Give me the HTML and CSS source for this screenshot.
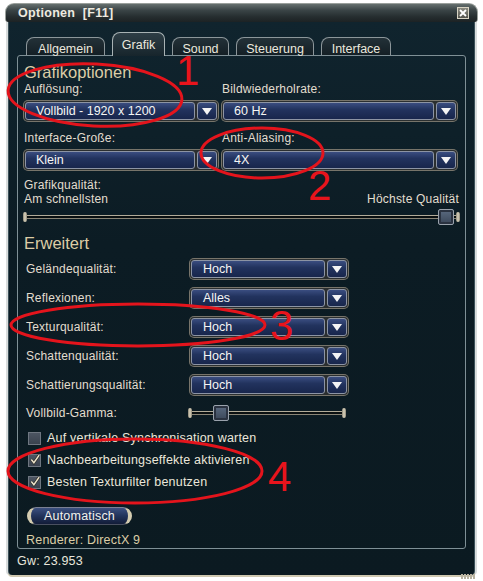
FILE: index.html
```html
<!DOCTYPE html>
<html lang="de">
<head>
<meta charset="utf-8">
<title>Optionen</title>
<link rel="stylesheet" href="styles.css">
</head>
<body>
<div class="window">
  <div class="titlebar">
    <span class="title">Optionen&nbsp; [F11]</span>
    <span class="close"><svg width="8" height="8" viewBox="0 0 8 8"><path d="M1 1L7 7M7 1L1 7" stroke="#fff" stroke-width="1.8"/></svg></span>
  </div>
  <div class="frame">
    <div class="tabs">
      <div class="tab t1">Allgemein</div>
      <div class="tab t2 active">Grafik</div>
      <div class="tab t3">Sound</div>
      <div class="tab t4">Steuerung</div>
      <div class="tab t5">Interface</div>
    </div>
    <div class="panel">
      <div class="heading h-top">Grafikoptionen</div>
      <div class="grid2">
        <div class="cell">
          <div class="label">Auflösung:</div>
          <div class="dd"><div class="v">Vollbild - 1920 x 1200</div><div class="a"><i></i></div></div>
        </div>
        <div class="cell">
          <div class="label">Bildwiederholrate:</div>
          <div class="dd"><div class="v">60 Hz</div><div class="a"><i></i></div></div>
        </div>
        <div class="cell">
          <div class="label">Interface-Große:</div>
          <div class="dd"><div class="v">Klein</div><div class="a"><i></i></div></div>
        </div>
        <div class="cell">
          <div class="label">Anti-Aliasing:</div>
          <div class="dd"><div class="v">4X</div><div class="a"><i></i></div></div>
        </div>
      </div>
      <div class="quality">
        <div class="label">Grafikqualität:</div>
        <div class="qrow"><span class="label">Am schnellsten</span><span class="label">Höchste Qualität</span></div>
      </div>
      <div class="slider wide"><span class="cap"></span><span class="track"></span><span class="cap"></span><span class="thumb thumb-q"></span></div>
      <div class="heading h-adv">Erweitert</div>
      <div class="rows">
        <div class="row"><div class="label">Geländequalität:</div><div class="dd small"><div class="v">Hoch</div><div class="a"><i></i></div></div></div>
        <div class="row"><div class="label">Reflexionen:</div><div class="dd small"><div class="v">Alles</div><div class="a"><i></i></div></div></div>
        <div class="row"><div class="label">Texturqualität:</div><div class="dd small"><div class="v">Hoch</div><div class="a"><i></i></div></div></div>
        <div class="row"><div class="label">Schattenqualität:</div><div class="dd small"><div class="v">Hoch</div><div class="a"><i></i></div></div></div>
        <div class="row"><div class="label">Schattierungsqualität:</div><div class="dd small"><div class="v">Hoch</div><div class="a"><i></i></div></div></div>
      </div>
      <div class="row gamma">
        <div class="label">Vollbild-Gamma:</div>
        <div class="slider short"><span class="cap"></span><span class="track"></span><span class="cap"></span><span class="thumb thumb-g"></span></div>
      </div>
      <div class="checks">
        <div class="check"><span class="box"></span><span class="label">Auf vertikale Synchronisation warten</span></div>
        <div class="check"><span class="box"><svg width="13" height="13" viewBox="0 0 13 13"><path d="M2.5 6.5L5.3 10L11 1.8" fill="none" stroke="#2a2a24" stroke-width="3"/><path d="M2.5 6.5L5.3 10L11 1.8" fill="none" stroke="#ece4cc" stroke-width="1.6"/></svg></span><span class="label">Nachbearbeitungseffekte aktivieren</span></div>
        <div class="check"><span class="box"><svg width="13" height="13" viewBox="0 0 13 13"><path d="M2.5 6.5L5.3 10L11 1.8" fill="none" stroke="#2a2a24" stroke-width="3"/><path d="M2.5 6.5L5.3 10L11 1.8" fill="none" stroke="#ece4cc" stroke-width="1.6"/></svg></span><span class="label">Besten Texturfilter benutzen</span></div>
      </div>
      <div class="btn">Automatisch</div>
      <div class="renderer">Renderer: DirectX 9</div>
    </div>
    <div class="gw">Gw: 23.953</div>
    <span class="grip"></span>
  </div>
</div>

<svg class="marks" width="483" height="581" viewBox="0 0 483 581">
  <g fill="none" stroke="#e4141c" stroke-width="3">
    <ellipse cx="95" cy="95" rx="87" ry="31" transform="rotate(3 95 95)"/>
    <ellipse cx="262" cy="153" rx="61" ry="25"/>
    <ellipse cx="138" cy="325" rx="127" ry="21"/>
    <ellipse cx="135" cy="471" rx="127" ry="32"/>
  </g>
</svg>
<div class="num n1">1</div>
<div class="num n2">2</div>
<div class="num n3">3</div>
<div class="num n4">4</div>
</body>
</html>
```
FILE: styles.css
```css
* { box-sizing: border-box; }
html, body { margin: 0; padding: 0; }
body {
  background: #ffffff;
  width: 483px;
  height: 581px;
  position: relative;
  overflow: hidden;
  font-family: "Liberation Sans", Arial, sans-serif;
  font-size: 12px;
}
.window {
  margin: 3px 0 0 5px;
  width: 473px;
}
.titlebar {
  height: 19px;
  border-radius: 9px 9px 3px 3px;
  background: linear-gradient(#66706f 0%, #3a4446 35%, #262e30 70%, #1c2224 100%);
  border: 1px solid #9aa09c;
  border-bottom: none;
  display: flex;
  align-items: center;
  justify-content: space-between;
  padding: 0 8px 0 12px;
}
.title {
  color: #eeeae0;
  font-weight: bold;
  font-size: 12.5px;
  letter-spacing: 0.3px;
}
.close {
  width: 12px;
  height: 12px;
  background: linear-gradient(#8a8a80, #55554e);
  border: 1px solid #d8d4c4;
  display: flex;
  align-items: center;
  justify-content: center;
}
.frame {
  margin: 0 3px;
  height: 553px;
  background: linear-gradient(#10242e, #0c1c24 40%, #0b1a21);
  border-left: 1px solid #3b5058;
  border-right: 1px solid #3b5058;
  border-radius: 0 0 4px 4px;
  box-shadow: 0 2px 0 #cfc8b0, -2px 0 0 #d8dcdc, 2px 0 0 #d8dcdc;
  padding-top: 10px;
  position: relative;
}
.tabs {
  display: flex;
  align-items: flex-end;
  height: 23px;
  margin-left: 17px;
  gap: 7px;
  position: relative;
  z-index: 1;
}
.tab {
  height: 18px;
  border: 1px solid #8c969a;
  border-bottom: none;
  border-radius: 8px 7px 0 0;
  background: linear-gradient(#233138, #141f25);
  color: #ebe8de;
  font-size: 12.5px;
  text-align: center;
  padding-top: 3px;
  line-height: 16px;
}
.tab.active {
  height: 24px;
  padding-top: 4px;
  background: linear-gradient(#2e3e46, #17252c);
  border-color: #a8b2b4;
  margin-bottom: -1px;
}
.t1 { width: 79px; }
.t2 { width: 53px; }
.t3 { width: 57px; }
.t4 { width: 78px; }
.t5 { width: 70px; }
.panel {
  margin: 0 8px 0 8px;
  border: 1px solid #7f9096;
  border-radius: 3px;
  padding: 0 6px 1px 6px;
}
.heading {
  color: #dccda6;
  font-size: 16.5px;
  line-height: 19px;
  width: fit-content;
}
.h-top { margin-top: 7px; }
.h-adv { margin-top: 12px; line-height: 18px; }
.label {
  color: #e2ddcf;
  font-size: 12px;
  line-height: 14px;
  white-space: nowrap;
  letter-spacing: 0.2px;
}
.grid2 {
  display: grid;
  grid-template-columns: 194px 235px;
  column-gap: 4px;
  row-gap: 10px;
}
.cell .label { margin-bottom: 5px; }
.dd {
  display: flex;
  height: 20px;
  gap: 2px;
  padding: 1px;
  background: #2b2f30;
  border-radius: 4px;
  box-shadow: 0 0 0 1px #77746a;
}
.dd .v {
  flex: 1;
  background: linear-gradient(#3a4d80 0%, #22335e 40%, #18264c 100%);
  border: 1px solid #8c94a4;
  border-radius: 3px;
  color: #f6f6f4;
  font-size: 12.5px;
  line-height: 16px;
  padding-left: 10px;
  white-space: nowrap;
  overflow: hidden;
}
.dd .a {
  width: 20px;
  background: linear-gradient(#3a4d80 0%, #22335e 45%, #18264c 100%);
  border: 1px solid #8c94a4;
  border-radius: 3px;
  display: flex;
  align-items: center;
  justify-content: center;
}
.dd .a i {
  display: block;
  width: 0;
  height: 0;
  border-left: 5px solid transparent;
  border-right: 5px solid transparent;
  border-top: 7px solid #f4f4f4;
  margin-top: 1px;
}
.dd.small .v { padding-left: 11px; }
.quality { margin-top: 8px; }
.qrow {
  display: flex;
  justify-content: space-between;
}
.slider {
  height: 10px;
  display: flex;
  align-items: center;
  position: relative;
}
.slider.wide { margin: 6px -1px 0 -1px; }
.slider .cap {
  width: 4px;
  height: 10px;
  border-radius: 2px;
  background: linear-gradient(90deg, #8a8474, #ddd6c0, #8a8474);
}
.slider .track {
  flex: 1;
  height: 4px;
  border-top: 1px solid #b2ab98;
  border-bottom: 1px solid #8a8576;
  background: #0a0f10;
}
.slider .thumb {
  position: absolute;
  top: -3px;
  width: 16px;
  height: 16px;
  background: linear-gradient(#5a6a80, #3a4658);
  border: 1px solid #9aa2ac;
  box-shadow: inset 0 0 0 2px #2a3240;
  border-radius: 2px;
}
.thumb-q { left: 415px; }
.thumb-g { left: 25px; }
.rows {
  margin-top: 7px;
  display: flex;
  flex-direction: column;
  gap: 9px;
}
.row {
  display: grid;
  grid-template-columns: 166px 158px;
  align-items: center;
}
.row .label { padding-left: 2px; }
.gamma {
  margin-top: 11px;
  grid-template-columns: 164px 158px;
  height: 10px;
}
.checks {
  margin-top: 14px;
  display: flex;
  flex-direction: column;
  gap: 6px;
}
.check {
  display: flex;
  align-items: center;
  height: 16px;
  gap: 6px;
  padding-left: 4px;
}
.check .label { color: #ebe7da; font-size: 12.5px; }
.box {
  width: 13px;
  height: 13px;
  background: linear-gradient(#4c5562, #3a424e);
  border: 1px solid #6e7680;
  display: flex;
  align-items: center;
  justify-content: center;
  overflow: visible;
}
.box svg { margin: -2px -1px 0 0; }
.btn {
  margin: 17px 0 0 3px;
  width: 105px;
  height: 18px;
  border-radius: 9px;
  border-left: 4px solid #d4ccb0;
  border-right: 4px solid #d4ccb0;
  border-top: 1px solid #7a8094;
  border-bottom: 1px solid #4a5060;
  background: linear-gradient(#3c5080 0%, #24365e 45%, #121c38 100%);
  color: #f2f2ee;
  font-size: 12.5px;
  line-height: 16px;
  text-align: center;
  letter-spacing: 0.2px;
}
.renderer {
  margin-top: 8px;
  padding-left: 2px;
  color: #dccda6;
  font-size: 12.5px;
  line-height: 14px;
  letter-spacing: 0.2px;
}
.gw {
  margin: 5px 0 0 8px;
  color: #e8e6dc;
  font-size: 12.5px;
  line-height: 14px;
  letter-spacing: 0.2px;
}
.grip {
  position: absolute;
  right: -1px;
  bottom: -4px;
  width: 14px;
  height: 5px;
  background: repeating-linear-gradient(90deg, #b8b2a0 0 2px, transparent 2px 3px);
}
.marks {
  position: absolute;
  left: 0;
  top: 0;
  pointer-events: none;
}
.num {
  position: absolute;
  color: #e8141c;
  font-family: "Liberation Sans", Arial, sans-serif;
  font-size: 42px;
  line-height: 32px;
}
.n1 { left: 176px; top: 55px; }
.n2 { left: 308px; top: 170px; }
.n3 { left: 270px; top: 310px; }
.n4 { left: 268px; top: 461px; }
```
